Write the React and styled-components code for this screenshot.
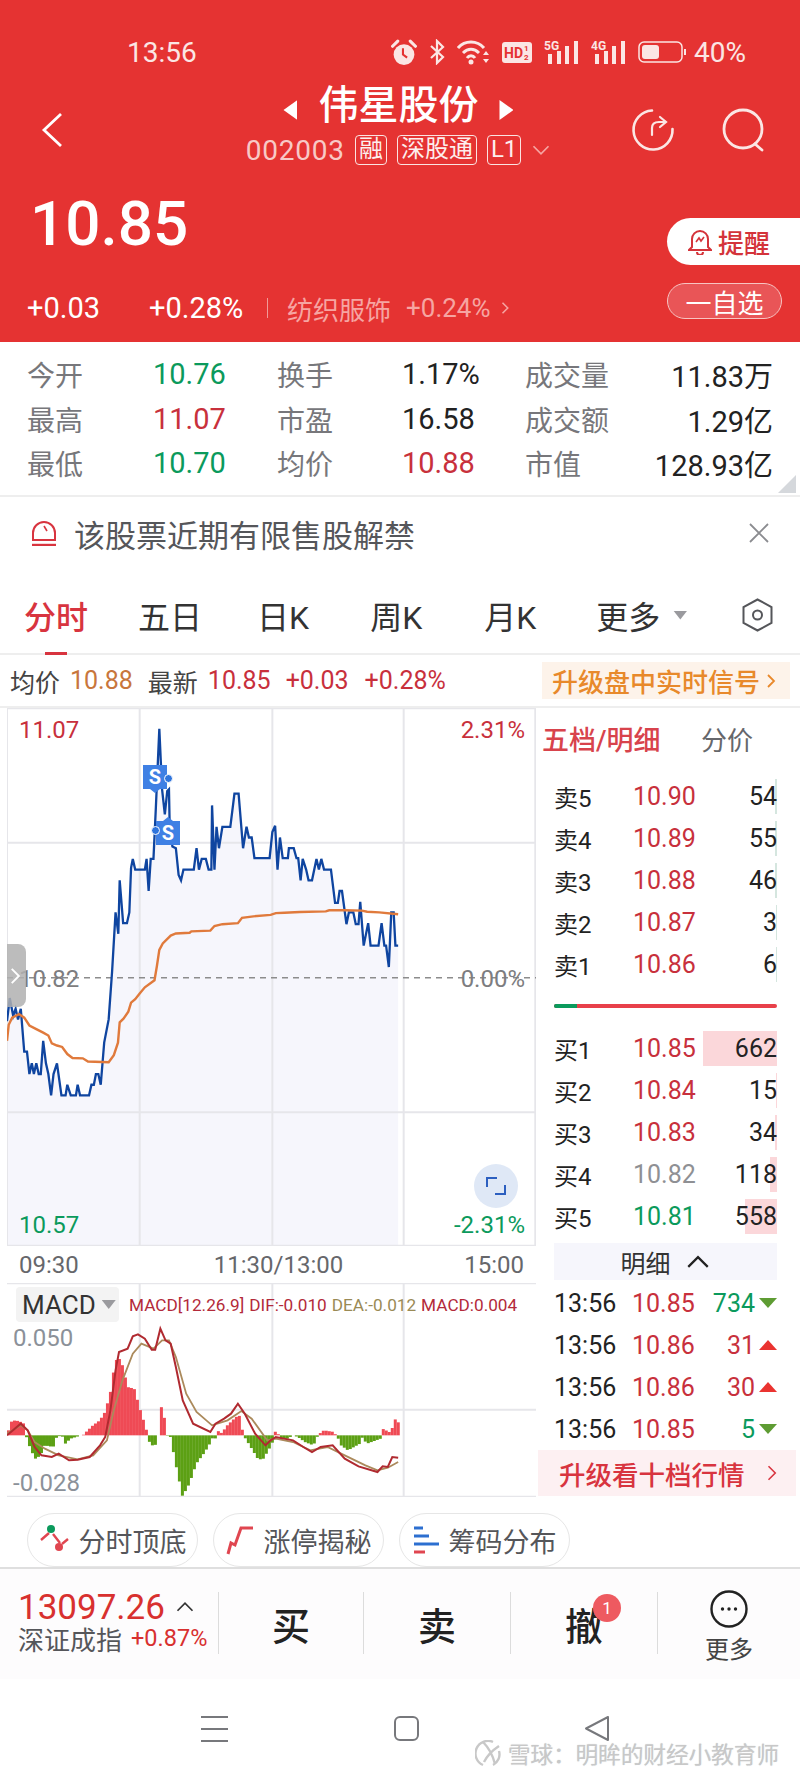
import React from "react";
import styled, { createGlobalStyle } from "styled-components";

const RED = "#e53332";
const UP = "#c8303c";
const DOWN = "#0b9a5c";

const GlobalStyle = createGlobalStyle`
    html, body { margin: 0; padding: 0; background: #fff; }
    * { box-sizing: border-box; }
    body { font-family: Roboto, "Noto Sans CJK SC", sans-serif; color: #222; }
`;

const Page = styled.div`
    width: 800px;
    height: 1778px;
    overflow: hidden;
    position: relative;
    background: #fff;
`;

/* ---------- red header ---------- */
const Header = styled.header`
    height: 342px;
    background: ${RED};
    color: #fff;
`;
const StatusBar = styled.div`
    height: 80px;
    padding: 24px 54px 0 127px;
    display: flex;
    align-items: center;
    justify-content: space-between;
    color: #fbe6e4;
`;
const Clock = styled.span`
    font-size: 28px;
`;
const StatusIcons = styled.div`
    display: flex;
    align-items: center;
    gap: 12px;
`;
const BatteryText = styled.span`
    font-size: 28px;
    margin-left: -4px;
`;
const NavRow = styled.div`
    height: 100px;
    display: grid;
    grid-template-columns: 1fr auto 1fr;
    align-items: center;
    padding: 0 34px 0 41px;
`;
const NavRight = styled.div`
    display: flex;
    justify-content: flex-end;
    gap: 47px;
`;
const TitleBlock = styled.div`
    align-self: start;
    margin: 4px 10px 0 0;
    display: flex;
    flex-direction: column;
    align-items: center;
`;
const TitleLine = styled.div`
    display: flex;
    align-items: center;
    gap: 21px;
    height: 44px;
`;
const StockName = styled.h1`
    margin: 0;
    font-size: 40px;
    font-weight: 500;
    line-height: 44px;
`;
const Arrow = styled.i`
    width: 14px;
    height: 20px;
    margin-top: 8px;
    background: #fff;
    clip-path: ${(p) => (p.$left ? "polygon(100% 0, 100% 100%, 0 50%)" : "polygon(0 0, 100% 50%, 0 100%)")};
`;
const CodeLine = styled.div`
    display: flex;
    align-items: center;
    gap: 10px;
    margin-top: 6px;
    height: 32px;
`;
const Code = styled.span`
    font-size: 28px;
    letter-spacing: 0.8px;
    color: #f8c9c6;
`;
const Tag = styled.span`
    height: 30px;
    padding: 0 3px;
    border: 1.5px solid #fbe3e1;
    border-radius: 4px;
    font-size: 24px;
    line-height: 26px;
    color: #fdeeed;
`;
const QuoteArea = styled.div`
    height: 162px;
    display: flex;
    justify-content: space-between;
`;
const QuoteLeft = styled.div`
    padding-top: 14px;
`;
const LastPrice = styled.div`
    padding-left: 30px;
    font-size: 62px;
    font-weight: 500;
    line-height: 60px;
`;
const ChangeRow = styled.div`
    margin-top: 34px;
    height: 40px;
    padding-left: 27px;
    display: flex;
    align-items: center;
    font-size: 29px;
`;
const ChangeValue = styled.span`
    width: ${(p) => p.$w}px;
`;
const Split = styled.i`
    width: 1px;
    height: 20px;
    background: #f19a97;
    margin: 0 19px 0 0;
`;
const Sector = styled.span`
    color: #f6a5a2;
    font-size: ${(p) => p.$size}px;
    margin-right: ${(p) => p.$gap}px;
`;
const QuoteRight = styled.div`
    width: 133px;
    padding-top: 38px;
    display: flex;
    flex-direction: column;
    gap: 18px;
`;
const RemindPill = styled.div`
    height: 47px;
    padding-left: 21px;
    display: flex;
    align-items: center;
    gap: 6px;
    background: #fff;
    border-radius: 24px 0 0 24px;
    color: #d4333a;
    font-size: 26px;
    font-weight: 500;
`;
const WatchPill = styled.div`
    width: 115px;
    height: 36px;
    display: flex;
    align-items: center;
    justify-content: center;
    background: #e95557;
    border: 1.5px solid #f7c4c2;
    border-radius: 18px;
    font-size: 26px;
`;

/* ---------- quote table ---------- */
const QuoteGrid = styled.div`
    position: relative;
    height: 155px;
    padding: 10px 27px 0 27px;
    display: grid;
    grid-template-columns: 126px 124px 125px 123px 100px 1fr;
    grid-auto-rows: 44.5px;
    align-items: center;
    border-bottom: 2px solid #eeeeee;
    font-size: 28px;
`;
const QLabel = styled.span`
    color: #77777b;
`;
const QValue = styled.span`
    color: ${(p) => p.$color || "#222"};
    text-align: ${(p) => (p.$right ? "right" : "left")};
    white-space: nowrap;
    font-size: 29px;
    ${(p) => p.$right && "grid-column: 6; justify-self: end;"}
`;
const CornerMark = styled.i`
    position: absolute;
    right: 4px;
    bottom: 2px;
    width: 18px;
    height: 18px;
    background: #d5d8dc;
    clip-path: polygon(100% 0, 100% 100%, 0 100%);
`;
const Notice = styled.div`
    height: 72px;
    padding: 0 31px;
    display: flex;
    align-items: center;
    font-size: 31px;
    color: #55565a;
`;
const NoticeText = styled.span`
    margin-left: 17px;
    flex: 1;
`;

/* ---------- tabs ---------- */
const Tabs = styled.nav`
    height: 86px;
    padding: 30px 27px 22px 24px;
    display: flex;
    align-items: center;
    border-bottom: 2px solid #eeeeee;
`;
const Tab = styled.span`
    position: relative;
    display: flex;
    align-items: center;
    gap: 13px;
    margin-right: ${(p) => p.$gap}px;
    font-size: 32px;
    color: ${(p) => (p.$active ? "#d8343f" : "#333")};
    font-weight: ${(p) => (p.$active ? 500 : 400)};
    ${(p) =>
        p.$active &&
        `&::after {
            content: "";
            position: absolute;
            left: 21px;
            bottom: -17px;
            width: 22px;
            height: 3px;
            background: #d8343f;
        }`}
`;
const HexSlot = styled.span`
    margin-left: auto;
    display: flex;
`;
const TabCaret = styled.i`
    width: 14px;
    height: 9px;
    background: #9a9a9e;
    clip-path: polygon(0 0, 100% 0, 50% 100%);
`;
const Summary = styled.div`
    height: 53px;
    padding: 0 10px 0 10px;
    display: flex;
    align-items: center;
    border-bottom: 2px solid #eeeeee;
    font-size: 25px;
`;
const SumItem = styled.span`
    color: ${(p) => p.$color || "#444"};
    margin-right: ${(p) => p.$gap}px;
    white-space: nowrap;
`;
const SignalButton = styled.div`
    margin-left: auto;
    width: 248px;
    height: 37px;
    padding-left: 10px;
    display: flex;
    align-items: center;
    gap: 4px;
    background: #fdf3ea;
    color: #e8892b;
    font-size: 26px;
    font-weight: 500;
    white-space: nowrap;
`;

/* ---------- market area ---------- */
const Market = styled.div`
    height: 789px;
    display: grid;
    grid-template-columns: 537px 263px;
`;
const LeftCol = styled.div`
    display: flex;
    flex-direction: column;
`;
const ChartBox = styled.div`
    position: relative;
    margin-left: 7px;
    width: 529px;
    height: 538px;
`;
const ChartSvg = styled.svg`
    display: block;
    width: 100%;
    height: 100%;
`;
const AxisLabel = styled.span`
    position: absolute;
    ${(p) => (p.$right ? "right: 11px;" : "left: 12px;")}
    top: ${(p) => p.$top}px;
    line-height: 28px;
    font-size: 24px;
    color: ${(p) => p.$color};
`;
const SignalTag = styled.span`
    position: absolute;
    left: ${(p) => p.$left}px;
    top: ${(p) => p.$top}px;
    width: 24px;
    height: 24px;
    background: #3f80e4;
    color: #fff;
    font-size: 20px;
    font-weight: 700;
    line-height: 24px;
    text-align: center;
    &::after {
        content: "";
        position: absolute;
        left: 7px;
        ${(p) => (p.$pointUp ? "top: -4px;" : "bottom: -4px;")}
        width: 10px;
        height: 4px;
        background: #3f80e4;
        clip-path: ${(p) => (p.$pointUp ? "polygon(50% 0, 100% 100%, 0 100%)" : "polygon(0 0, 100% 0, 50% 100%)")};
    }
`;
const SignalDot = styled.i`
    position: absolute;
    left: ${(p) => p.$left}px;
    top: ${(p) => p.$top}px;
    width: 9px;
    height: 9px;
    border-radius: 50%;
    background: #2f74dc;
    border: 1px solid #fff;
`;
const SideHandle = styled.div`
    position: absolute;
    left: 0;
    top: 236px;
    width: 19px;
    height: 63px;
    display: flex;
    align-items: center;
    background: rgba(176, 176, 176, 0.85);
    border-radius: 0 8px 8px 0;
`;
const ExpandButton = styled.div`
    position: absolute;
    left: 467px;
    top: 456px;
    width: 44px;
    height: 44px;
    display: flex;
    align-items: center;
    justify-content: center;
    border-radius: 50%;
    background: #dfe8f6;
`;
const TimeAxis = styled.div`
    height: 37px;
    padding: 0 13px 0 19px;
    display: flex;
    align-items: center;
    justify-content: space-between;
    font-size: 24px;
    color: #66676b;
`;
const MidTime = styled.span`
    margin-left: 14px;
`;
const MacdBox = styled.div`
    position: relative;
    margin-left: 7px;
    width: 529px;
    height: 214px;
`;
const MacdSelect = styled.div`
    position: absolute;
    left: 9px;
    top: 4px;
    width: 103px;
    height: 35px;
    padding-left: 6px;
    display: flex;
    align-items: center;
    gap: 6px;
    background: #f3f3f3;
    border-radius: 4px;
    font-size: 26px;
    color: #333;
`;
const MacdLegend = styled.div`
    position: absolute;
    left: 122px;
    top: 11px;
    display: flex;
    gap: 5px;
    font-size: 17.2px;
    line-height: 22px;
    white-space: nowrap;
`;
const LegendItem = styled.span`
    color: ${(p) => p.$color};
`;
const MacdValue = styled.span`
    position: absolute;
    left: 6px;
    top: ${(p) => p.$top}px;
    font-size: 24px;
    line-height: 28px;
    color: #8b9199;
`;

/* ---------- order book ---------- */
const Book = styled.aside`
    min-width: 0;
    display: flex;
    flex-direction: column;
`;
const BookHead = styled.div`
    height: 67px;
    padding: 14px 0 0 5px;
    display: flex;
    align-items: flex-start;
`;
const BookTitle = styled.span`
    width: ${(p) => p.$w}px;
    line-height: 38px;
    color: ${(p) => p.$color};
    font-size: ${(p) => p.$size}px;
    font-weight: ${(p) => p.$weight};
`;
const BookBody = styled.div`
    padding: 0 23px 0 17px;
`;
const LevelRow = styled.div`
    height: 42px;
    display: grid;
    grid-template-columns: 79px 70px 1fr;
    align-items: center;
    font-size: 24px;
`;
const LevelPrice = styled.span`
    color: ${(p) => p.$color};
    font-size: 25px;
`;
const LevelQty = styled.span`
    height: 35px;
    line-height: 35px;
    text-align: right;
    font-size: 25px;
    background: linear-gradient(
        to left,
        ${(p) => p.$tint} ${(p) => p.$bar}px,
        transparent ${(p) => p.$bar}px
    );
`;
const DepthBar = styled.div`
    height: 4px;
    margin: 19px 0 19px;
    display: flex;
    border-radius: 2px;
    overflow: hidden;
    background: #e8404a;
`;
const DepthBuy = styled.i`
    width: 23px;
    background: #0b9a5c;
`;
const DetailBand = styled.div`
    height: 37px;
    margin: 6px 0 2px;
    display: flex;
    align-items: center;
    justify-content: center;
    gap: 14px;
    background: #f6f6fc;
    font-size: 25px;
    color: #333;
`;
const TickRow = styled.div`
    height: 42px;
    display: grid;
    grid-template-columns: 78px 70px 1fr 18px;
    align-items: center;
    font-size: 25px;
    white-space: nowrap;
`;
const TickQty = styled.span`
    text-align: right;
    padding-right: 4px;
    color: ${(p) => p.$color};
`;
const TickMark = styled.i`
    width: 18px;
    height: 10px;
    background: ${(p) => (p.$up ? "#ea3330" : "#5e9c33")};
    clip-path: ${(p) => (p.$up ? "polygon(50% 0, 100% 100%, 0 100%)" : "polygon(0 0, 100% 0, 50% 100%)")};
`;
const UpgradeBand = styled.div`
    height: 46px;
    margin: 0 4px 0 1px;
    padding: 0 14px 0 21px;
    display: flex;
    align-items: center;
    justify-content: space-between;
    background: #fdf0f2;
    color: #d8343f;
    font-size: 26.5px;
    font-weight: 500;
`;

/* ---------- pills + bottom bar ---------- */
const PillRow = styled.div`
    height: 72px;
    padding: 16px 0 0 27px;
    display: flex;
    gap: 15px;
    border-bottom: 2px solid #dfdfdf;
`;
const Pill = styled.div`
    width: 171px;
    height: 54px;
    display: flex;
    align-items: center;
    justify-content: center;
    gap: 10px;
    border: 1.5px solid #e6e6e6;
    border-radius: 27px;
    font-size: 27px;
    color: #55565a;
`;
const ActionBar = styled.div`
    height: 110px;
    padding-top: 23px;
    display: grid;
    grid-template-columns: 218px 145px 147px 147px 1fr;
    align-items: start;
    background: #fdfcfd;
`;
const IndexBlock = styled.div`
    padding-left: 18px;
    margin-top: -4px;
`;
const IndexTop = styled.div`
    display: flex;
    align-items: center;
    gap: 10px;
    height: 38px;
    font-size: 35px;
    color: #d8302f;
`;
const IndexBottom = styled.div`
    display: flex;
    align-items: center;
    gap: 9px;
    height: 30px;
    margin-top: -3px;
    font-size: 26px;
    color: #55565a;
    white-space: nowrap;
`;
const IndexChange = styled.span`
    font-size: 23.5px;
    color: #d8302f;
`;
const ActionCell = styled.div`
    position: relative;
    height: 62px;
    display: flex;
    flex-direction: column;
    align-items: center;
    justify-content: ${(p) => (p.$top ? "flex-start" : "center")};
    border-left: 1.5px solid #dcdcdc;
    font-size: 38px;
    font-weight: 500;
    color: #222;
`;
const Badge = styled.span`
    position: absolute;
    left: 82px;
    top: 2px;
    width: 28px;
    height: 28px;
    border-radius: 50%;
    background: #ee5a60;
    color: #fff;
    font-size: 17px;
    font-weight: 400;
    line-height: 28px;
    text-align: center;
`;
const MoreCircle = styled.span`
    display: flex;
    margin-top: -2px;
`;
const MoreLabel = styled.span`
    font-size: 24px;
    font-weight: 400;
    line-height: 30px;
    margin-top: 7px;
    color: #444;
`;
const NavBar = styled.div`
    position: relative;
    height: 98px;
    padding: 37px 0 0 11px;
    display: flex;
    align-items: flex-start;
    justify-content: center;
    gap: 166px;
`;
const Watermark = styled.div`
    position: absolute;
    left: 475px;
    top: 58px;
    display: flex;
    align-items: center;
    gap: 7px;
    font-size: 22.6px;
    color: #c8c8c8;
    white-space: nowrap;
    text-shadow: 1px 1px 0 rgba(255, 255, 255, 0.9), 0 0 1px #bbb;
`;

/* ---------- data ---------- */
const priceLine =
    "20,900 28,835 38,885 45,865 52,895 60,865 70,985 78,985 85,1048 92,1018 98,1048 105,1018 112,1048 118,1048 125,955 133,1018 140,1048 148,1108 155,1048 165,1018 178,1108 190,1108 195,1078 205,1108 220,1108 225,1078 232,1108 258,1108 265,1078 272,1078 278,1048 285,1048 292,1078 302,960 315,895 325,760 335,595 343,655 347,505 357,625 368,625 375,595 380,470 385,445 392,475 420,475 425,445 431,535 437,445 445,445 452,300 462,80 470,250 478,320 485,255 490,250 492,350 500,410 510,415 518,490 525,505 532,475 562,475 570,415 577,475 585,445 597,445 605,475 613,475 615,295 622,475 628,355 635,415 645,355 668,355 680,262 692,262 705,415 715,355 722,385 730,385 738,443 782,443 790,370 798,352 805,475 812,385 820,443 835,443 838,415 852,415 860,443 865,443 872,505 878,445 888,475 895,505 905,505 918,445 925,475 932,445 940,475 960,475 972,568 980,568 985,535 992,535 1005,628 1012,595 1025,595 1032,628 1040,628 1045,565 1055,688 1068,625 1075,688 1098,688 1107,625 1115,688 1120,688 1128,748 1135,595 1142,595 1147,688 1155,688";
const avgLine =
    "20,955 25,910 35,890 55,880 70,890 85,912 105,922 125,932 140,940 150,962 165,968 180,972 195,992 210,1003 240,1004 255,1013 315,1015 330,995 342,960 347,903 358,893 372,873 380,848 392,838 405,822 420,805 448,785 455,745 462,700 472,682 495,660 510,654 550,652 555,648 610,646 622,633 645,628 690,625 702,610 735,606 785,602 800,597 825,596 870,594 945,592 955,589 1000,589 1050,590 1065,593 1100,595 1155,600";
const difLine =
    "20,525 60,490 80,510 100,560 120,585 150,590 170,580 200,600 225,598 260,590 290,555 305,530 320,450 335,330 345,275 370,265 385,228 400,222 420,235 440,268 450,268 465,205 480,240 495,250 510,320 530,420 560,490 610,515 625,490 650,475 670,460 690,430 710,460 740,520 770,555 785,540 800,530 850,540 880,560 905,575 930,560 965,555 1000,595 1040,618 1095,635 1110,618 1125,620 1138,590 1155,592";
const deaLine =
    "20,520 60,495 80,510 100,545 130,565 170,585 225,597 270,585 310,540 330,450 355,360 385,280 410,250 445,265 470,240 490,240 510,290 540,400 570,455 615,495 660,480 700,452 730,475 775,540 800,535 850,545 900,570 950,560 1000,585 1060,615 1095,630 1125,622 1155,605";

// 柱状图外廓：[x, y]，y=525 是零轴
const macdShape = [
    [20, 510], [30, 480], [50, 482], [65, 490], [71, 525], [72, 530], [85, 570], [100, 598], [115, 580], [125, 555],
    [150, 560], [160, 530], [175, 525], [185, 550], [200, 535], [222, 528], [224, 525], [236, 525], [240, 520], [265, 495],
    [285, 480], [300, 455], [315, 400], [330, 300], [345, 295], [355, 330], [365, 380], [385, 385], [400, 440], [415, 490],
    [425, 525], [430, 550], [445, 560], [452, 525], [455, 525], [462, 438], [470, 450], [478, 525], [490, 530], [505, 610],
    [525, 708], [545, 670], [565, 610], [590, 575], [610, 540], [614, 525], [620, 535], [624, 525], [630, 510], [640, 520],
    [650, 500], [680, 470], [695, 465], [700, 525], [705, 530], [720, 555], [745, 598], [760, 595], [785, 550], [790, 525],
    [798, 505], [804, 525], [810, 535], [830, 535], [845, 525], [860, 530], [880, 545], [905, 555], [918, 525], [925, 518],
    [935, 510], [965, 515], [970, 525], [975, 530], [985, 555], [1005, 570], [1040, 550], [1045, 530], [1060, 550], [1100, 535],
    [1103, 525], [1105, 505], [1125, 515], [1128, 530], [1132, 510], [1140, 475], [1155, 490],
];

const shapeAt = (x) => {
    for (let i = 1; i < macdShape.length; i++) {
        const [x0, y0] = macdShape[i - 1];
        const [x1, y1] = macdShape[i];
        if (x <= x1) return y0 + ((y1 - y0) * (x - x0)) / (x1 - x0 || 1);
    }
    return 525;
};

const macdBars = [];
for (let x = 20; x < 1157; x += 8.7) macdBars.push({ x, y: shapeAt(x) });

const asks = [
    ["卖5", "10.90", "54", 2],
    ["卖4", "10.89", "55", 2],
    ["卖3", "10.88", "46", 2],
    ["卖2", "10.87", "3", 1],
    ["卖1", "10.86", "6", 1],
];
const bids = [
    ["买1", "10.85", "662", 79, UP],
    ["买2", "10.84", "15", 1, UP],
    ["买3", "10.83", "34", 2, UP],
    ["买4", "10.82", "118", 7, "#8f9094"],
    ["买5", "10.81", "558", 32, DOWN],
];
const ticks = [
    ["10.85", "734", false],
    ["10.86", "31", true],
    ["10.86", "30", true],
    ["10.85", "5", false],
];
const quoteRows = [
    ["今开", "10.76", DOWN, "换手", "1.17%", "", "成交量", "11.83万"],
    ["最高", "11.07", UP, "市盈", "16.58", "", "成交额", "1.29亿"],
    ["最低", "10.70", DOWN, "均价", "10.88", UP, "市值", "128.93亿"],
];

/* ---------- icons ---------- */
const Alarm = () => (
    <svg width="26" height="27" viewBox="0 0 24 26">
        <circle cx="12" cy="15" r="10" fill="currentColor" />
        <path d="M1 7 L6 2 M23 7 L18 2" stroke="currentColor" strokeWidth="3" strokeLinecap="round" />
        <path d="M11 9 V15 L15 18" stroke="#e53332" strokeWidth="2" fill="none" />
    </svg>
);
const Bluetooth = () => (
    <svg width="16" height="26" viewBox="0 0 16 26" fill="none" stroke="currentColor" strokeWidth="2.2">
        <path d="M2 7 L14 18 L8 24 V2 L14 8 L2 19" />
    </svg>
);
const Wifi = () => (
    <svg width="33" height="26" viewBox="0 0 33 26" fill="none" stroke="currentColor" strokeWidth="3">
        <path d="M1 9 C8 1 20 1 27 9 M6 14 C11 9 17 9 22 14 M10 19 C12 16 16 16 18 19" />
        <circle cx="14" cy="23" r="2.5" fill="currentColor" stroke="none" />
        <path d="M26 16 L29 12 L32 16 Z M26 20 L32 20 L29 24 Z" fill="currentColor" stroke="none" />
    </svg>
);
const HdBadge = () => (
    <svg width="30" height="21" viewBox="0 0 30 21">
        <rect width="30" height="21" rx="3" fill="currentColor" />
        <text x="2" y="16" fontFamily="Roboto" fontSize="14" fontWeight="700" fill="#e53332">HD</text>
        <text x="22" y="9" fontFamily="Roboto" fontSize="8" fontWeight="700" fill="#e53332">1</text>
        <text x="22" y="18" fontFamily="Roboto" fontSize="8" fontWeight="700" fill="#e53332">2</text>
    </svg>
);
const Signal = ({ label }) => (
    <svg width="35" height="24" viewBox="0 0 35 24">
        <text x="0" y="10" fontFamily="Roboto" fontSize="12" fontWeight="700" fill="currentColor">{label}</text>
        <rect x="4" y="14" width="4" height="10" fill="currentColor" />
        <rect x="13" y="11" width="4" height="13" fill="currentColor" />
        <rect x="21" y="6" width="4" height="18" fill="currentColor" />
        <rect x="30" y="1" width="4" height="23" fill="currentColor" />
    </svg>
);
const Battery = () => (
    <svg width="48" height="22" viewBox="0 0 48 22">
        <rect x="1" y="1" width="43" height="20" rx="5" fill="none" stroke="currentColor" strokeWidth="1.5" />
        <rect x="4" y="4" width="17" height="14" rx="3" fill="currentColor" />
        <rect x="46" y="8" width="2" height="6" fill="currentColor" />
    </svg>
);
const Back = () => (
    <svg width="22" height="36" viewBox="0 0 22 36" fill="none" stroke="#fff" strokeWidth="2.8">
        <path d="M20 2 L3 18 L20 34" />
    </svg>
);
const Share = () => (
    <svg width="44" height="44" viewBox="0 0 44 44" fill="none" stroke="#fbe6e4" strokeWidth="2.6" strokeLinecap="round">
        <path d="M21 2.5 A19.5 19.5 0 1 0 41.5 21" />
        <path d="M21 27 V20 C21 16 24 14 28 14 H34 M29 9 L35 14 L29 19" strokeWidth="2.2" />
    </svg>
);
const Search = () => (
    <svg width="44" height="44" viewBox="0 0 44 44" fill="none" stroke="#fbe6e4" strokeWidth="2.8" strokeLinecap="round">
        <circle cx="21" cy="21" r="19" />
        <path d="M33 36 L40 42" />
    </svg>
);
const SmallChevron = ({ dir = "right", color = "#f6a5a2", size = 14, weight = 1.8 }) => {
    const d = { right: "M4 2 L10 8 L4 14", down: "M2 5 L8 11 L14 5", up: "M2 11 L8 5 L14 11" }[dir];
    return (
        <svg width={size} height={size} viewBox="0 0 16 16" fill="none" stroke={color} strokeWidth={weight}>
            <path d={d} />
        </svg>
    );
};
const Bell = () => (
    <svg width="24" height="27" viewBox="0 0 24 27" fill="none" stroke="#d4333a" strokeWidth="2">
        <path d="M4 19 V11 A8 8 0 0 1 20 11 V19 L23 22 H1 Z" />
        <path d="M9 24 A3 3 0 0 0 15 24" />
        <path d="M8 14 L11 10 L13 13 L16 9" strokeWidth="1.6" />
    </svg>
);
const NoticeIcon = () => (
    <svg width="26" height="26" viewBox="0 0 26 26" fill="none" stroke="#d8343f" strokeWidth="2">
        <path d="M2 20 V13 A11 11 0 0 1 24 13 V20 Z" />
        <path d="M1 25 H25" strokeWidth="2.4" />
        <path d="M13 6 L16 11" strokeWidth="1.6" />
    </svg>
);
const CloseX = () => (
    <svg width="20" height="20" viewBox="0 0 20 20" stroke="#8b8c90" strokeWidth="1.8">
        <path d="M1 1 L19 19 M19 1 L1 19" />
    </svg>
);
const Hex = () => (
    <svg width="31" height="34" viewBox="0 0 31 34" fill="none" stroke="#55565a" strokeWidth="2">
        <path d="M15.5 1.5 L29.5 9 V25 L15.5 32.5 L1.5 25 V9 Z" />
        <circle cx="15.5" cy="17" r="4.5" />
    </svg>
);
const ExpandIcon = () => (
    <svg width="20" height="20" viewBox="0 0 20 20" fill="none" stroke="#2c5fc0" strokeWidth="2">
        <path d="M1 11 V2 H11 M9 18 H19 V9" />
    </svg>
);
const TurnIcon = () => (
    <svg width="30" height="30" viewBox="0 0 30 30" fill="none" stroke="#e04650" strokeWidth="2.4">
        <path d="M2 15 L10 8 M14 9 L21 18 M23 19 L29 14" />
        <circle cx="12" cy="4" r="4" fill="#0b9a5c" stroke="none" />
        <circle cx="20" cy="22" r="4" fill="#e04650" stroke="none" />
    </svg>
);
const LimitIcon = () => (
    <svg width="28" height="30" viewBox="0 0 28 30" fill="none" stroke="#e04650" strokeWidth="3">
        <path d="M2 29 L5 18 L9 20 L15 3 H27" />
    </svg>
);
const ChipIcon = () => (
    <svg width="26" height="30" viewBox="0 0 26 30" strokeWidth="3">
        <path d="M1 3 H10 M1 11 H16" stroke="#2c6fd0" />
        <path d="M1 19 H26" stroke="#2c6fd0" />
        <path d="M1 27 H12" stroke="#e04650" />
    </svg>
);
const MoreIcon = () => (
    <svg width="38" height="38" viewBox="0 0 38 38" fill="none" stroke="#222" strokeWidth="2.4">
        <circle cx="19" cy="19" r="17.5" />
        <g fill="#222" stroke="none">
            <circle cx="12.5" cy="19" r="1.7" />
            <circle cx="19" cy="19" r="1.7" />
            <circle cx="25.5" cy="19" r="1.7" />
        </g>
    </svg>
);
const MenuKey = () => (
    <svg width="27" height="26" viewBox="0 0 27 26" stroke="#77787c" strokeWidth="2">
        <path d="M0 1 H27 M0 13 H27 M0 25 H27" />
    </svg>
);
const HomeKey = () => (
    <svg width="25" height="25" viewBox="0 0 25 25" fill="none" stroke="#77787c" strokeWidth="2">
        <rect x="1" y="1" width="23" height="23" rx="5" />
    </svg>
);
const BackKey = () => (
    <svg width="25" height="25" viewBox="0 0 25 25" fill="none" stroke="#77787c" strokeWidth="2" strokeLinejoin="round">
        <path d="M23 1 V24 L1 12.5 Z" />
    </svg>
);
const XueqiuLogo = () => (
    <svg width="26" height="27" viewBox="0 0 26 27" fill="none" stroke="#c8c8c8" strokeWidth="2.4">
        <path d="M18 2 A12 12 0 0 0 8 25 M8 2 C14 8 18 16 20 24 M24 6 C18 10 12 16 9 22 M18 25 A12 12 0 0 0 24 11" />
    </svg>
);

const App = () => (
    <Page>
        <GlobalStyle />
        <Header>
            <StatusBar>
                <Clock>13:56</Clock>
                <StatusIcons>
                    <Alarm />
                    <Bluetooth />
                    <Wifi />
                    <HdBadge />
                    <Signal label="5G" />
                    <Signal label="4G" />
                    <Battery />
                    <BatteryText>40%</BatteryText>
                </StatusIcons>
            </StatusBar>
            <NavRow>
                <Back />
                <TitleBlock>
                    <TitleLine>
                        <Arrow $left />
                        <StockName>伟星股份</StockName>
                        <Arrow />
                    </TitleLine>
                    <CodeLine>
                        <Code>002003</Code>
                        <Tag>融</Tag>
                        <Tag>深股通</Tag>
                        <Tag>L1</Tag>
                        <SmallChevron dir="down" color="#f6a5a2" size={20} weight={1.4} />
                    </CodeLine>
                </TitleBlock>
                <NavRight>
                    <Share />
                    <Search />
                </NavRight>
            </NavRow>
            <QuoteArea>
                <QuoteLeft>
                    <LastPrice>10.85</LastPrice>
                    <ChangeRow>
                        <ChangeValue $w={122}>+0.03</ChangeValue>
                        <ChangeValue $w={118}>+0.28%</ChangeValue>
                        <Split />
                        <Sector $size={26} $gap={15}>纺织服饰</Sector>
                        <Sector $size={26} $gap={8}>+0.24%</Sector>
                        <SmallChevron />
                    </ChangeRow>
                </QuoteLeft>
                <QuoteRight>
                    <RemindPill>
                        <Bell />
                        提醒
                    </RemindPill>
                    <WatchPill>一自选</WatchPill>
                </QuoteRight>
            </QuoteArea>
        </Header>

        <QuoteGrid>
            {quoteRows.map((r) => (
                <React.Fragment key={r[0]}>
                    <QLabel>{r[0]}</QLabel>
                    <QValue $color={r[2]}>{r[1]}</QValue>
                    <QLabel>{r[3]}</QLabel>
                    <QValue $color={r[5]}>{r[4]}</QValue>
                    <QLabel>{r[6]}</QLabel>
                    <QValue $right>{r[7]}</QValue>
                </React.Fragment>
            ))}
            <CornerMark />
        </QuoteGrid>

        <Notice>
            <NoticeIcon />
            <NoticeText>该股票近期有限售股解禁</NoticeText>
            <CloseX />
        </Notice>

        <Tabs>
            <Tab $active $gap={50}>分时</Tab>
            <Tab $gap={55}>五日</Tab>
            <Tab $gap={61}>日K</Tab>
            <Tab $gap={62}>周K</Tab>
            <Tab $gap={60}>月K</Tab>
            <Tab $gap={0}>
                更多
                <TabCaret />
            </Tab>
            <HexSlot>
                <Hex />
            </HexSlot>
        </Tabs>

        <Summary>
            <SumItem $gap={10}>均价</SumItem>
            <SumItem $gap={15} $color="#c8763c">10.88</SumItem>
            <SumItem $gap={10}>最新</SumItem>
            <SumItem $gap={15} $color={UP}>10.85</SumItem>
            <SumItem $gap={16} $color={UP}>+0.03</SumItem>
            <SumItem $gap={0} $color={UP}>+0.28%</SumItem>
            <SignalButton>
                升级盘中实时信号
                <SmallChevron color="#e8892b" size={16} />
            </SignalButton>
        </Summary>

        <Market>
            <LeftCol>
                <ChartBox>
                    <ChartSvg viewBox="20 22 1535 1508" preserveAspectRatio="none">
                        <polygon points={`20,1530 ${priceLine} 1155,1530`} fill="#f6f6fc" />
                        <g stroke="#e6e6ea" strokeWidth="2">
                            <path d="M20 22 V1530 M405 22 V1530 M790 22 V1530 M1171 22 V1530 M1553 22 V1530" fill="none" vectorEffect="non-scaling-stroke" />
                            <path d="M20 23 H1555 M20 400 H1555 M20 1155 H1555 M20 1529 H1555" fill="none" vectorEffect="non-scaling-stroke" />
                        </g>
                        <path d="M20 778 H1555" stroke="#8c8c8c" strokeWidth="1.4" strokeDasharray="6 5" vectorEffect="non-scaling-stroke" />
                        <polyline points={priceLine} fill="none" stroke="#0f45a0" strokeWidth="2.3" vectorEffect="non-scaling-stroke" />
                        <polyline points={avgLine} fill="none" stroke="#e07a3c" strokeWidth="2.4" vectorEffect="non-scaling-stroke" />
                    </ChartSvg>
                    <AxisLabel $top={8} $color={UP}>11.07</AxisLabel>
                    <AxisLabel $top={8} $color={UP} $right>2.31%</AxisLabel>
                    <AxisLabel $top={257} $color="#7d7d80">10.82</AxisLabel>
                    <AxisLabel $top={257} $color="#7d7d80" $right>0.00%</AxisLabel>
                    <AxisLabel $top={503} $color={DOWN}>10.57</AxisLabel>
                    <AxisLabel $top={503} $color={DOWN} $right>-2.31%</AxisLabel>
                    <SignalTag $left={136} $top={57}>S</SignalTag>
                    <SignalDot $left={157} $top={66} />
                    <SignalTag $left={149} $top={113} $pointUp>S</SignalTag>
                    <SignalDot $left={144} $top={118} />
                    <SideHandle>
                        <SmallChevron color="#fff" size={22} weight={1.6} />
                    </SideHandle>
                    <ExpandButton>
                        <ExpandIcon />
                    </ExpandButton>
                </ChartBox>
                <TimeAxis>
                    <span>09:30</span>
                    <MidTime>11:30/13:00</MidTime>
                    <span>15:00</span>
                </TimeAxis>
                <MacdBox>
                    <ChartSvg viewBox="20 68 1535 642" preserveAspectRatio="none">
                        <g stroke="#e6e6ea" fill="none">
                            <path d="M405 68 V710 M790 68 V710 M1171 68 V710" strokeWidth="2" vectorEffect="non-scaling-stroke" />
                            <path d="M20 69 H1555 M20 448 H1555 M20 709 H1555" strokeWidth="2" vectorEffect="non-scaling-stroke" />
                        </g>
                        {macdBars.map((b) =>
                            Math.abs(b.y - 525) < 1 ? null : (
                                <rect
                                    key={b.x}
                                    x={b.x}
                                    y={Math.min(b.y, 525)}
                                    width="8.7"
                                    height={Math.abs(b.y - 525)}
                                    fill={b.y < 525 ? "#ef4a55" : "#5ca014"}
                                />
                            ),
                        )}
                        <polyline points={deaLine} fill="none" stroke="#ab8a5c" strokeWidth="1.8" vectorEffect="non-scaling-stroke" />
                        <polyline points={difLine} fill="none" stroke="#b02a30" strokeWidth="2" vectorEffect="non-scaling-stroke" />
                    </ChartSvg>
                    <MacdSelect>
                        MACD
                        <TabCaret />
                    </MacdSelect>
                    <MacdLegend>
                        <LegendItem $color="#b32a3a">MACD[12.26.9]</LegendItem>
                        <LegendItem $color="#b32a3a">DIF:-0.010</LegendItem>
                        <LegendItem $color="#9a8a55">DEA:-0.012</LegendItem>
                        <LegendItem $color="#b32a3a">MACD:0.004</LegendItem>
                    </MacdLegend>
                    <MacdValue $top={41}>0.050</MacdValue>
                    <MacdValue $top={186}>-0.028</MacdValue>
                </MacdBox>
            </LeftCol>

            <Book>
                <BookHead>
                    <BookTitle $w={159} $color="#d8434c" $size={27} $weight={500}>五档/明细</BookTitle>
                    <BookTitle $w={60} $color="#66676b" $size={26} $weight={400}>分价</BookTitle>
                </BookHead>
                <BookBody>
                    {asks.map(([label, price, qty, bar]) => (
                        <LevelRow key={label}>
                            <span>{label}</span>
                            <LevelPrice $color={UP}>{price}</LevelPrice>
                            <LevelQty $bar={bar} $tint="#d5e6df">{qty}</LevelQty>
                        </LevelRow>
                    ))}
                    <DepthBar>
                        <DepthBuy />
                    </DepthBar>
                    {bids.map(([label, price, qty, bar, color]) => (
                        <LevelRow key={label}>
                            <span>{label}</span>
                            <LevelPrice $color={color}>{price}</LevelPrice>
                            <LevelQty $bar={bar} $tint="#fbd7da">{qty}</LevelQty>
                        </LevelRow>
                    ))}
                    <DetailBand>
                        明细
                        <SmallChevron dir="up" color="#222" size={26} weight={1.4} />
                    </DetailBand>
                    {ticks.map(([price, qty, up], i) => (
                        <TickRow key={i}>
                            <span>13:56</span>
                            <LevelPrice $color={UP}>{price}</LevelPrice>
                            <TickQty $color={up ? UP : DOWN}>{qty}</TickQty>
                            <TickMark $up={up} />
                        </TickRow>
                    ))}
                </BookBody>
                <UpgradeBand>
                    升级看十档行情
                    <SmallChevron color="#d8343f" size={18} weight={1.4} />
                </UpgradeBand>
            </Book>
        </Market>

        <PillRow>
            <Pill>
                <TurnIcon />
                分时顶底
            </Pill>
            <Pill>
                <LimitIcon />
                涨停揭秘
            </Pill>
            <Pill>
                <ChipIcon />
                筹码分布
            </Pill>
        </PillRow>

        <ActionBar>
            <IndexBlock>
                <IndexTop>
                    13097.26
                    <SmallChevron dir="up" color="#333" size={20} weight={1.4} />
                </IndexTop>
                <IndexBottom>
                    深证成指
                    <IndexChange>+0.87%</IndexChange>
                </IndexBottom>
            </IndexBlock>
            <ActionCell>买</ActionCell>
            <ActionCell>卖</ActionCell>
            <ActionCell>
                撤
                <Badge>1</Badge>
            </ActionCell>
            <ActionCell $top>
                <MoreCircle>
                    <MoreIcon />
                </MoreCircle>
                <MoreLabel>更多</MoreLabel>
            </ActionCell>
        </ActionBar>

        <NavBar>
            <MenuKey />
            <HomeKey />
            <BackKey />
            <Watermark>
                <XueqiuLogo />
                雪球：明眸的财经小教育师
            </Watermark>
        </NavBar>
    </Page>
);

export default App;
